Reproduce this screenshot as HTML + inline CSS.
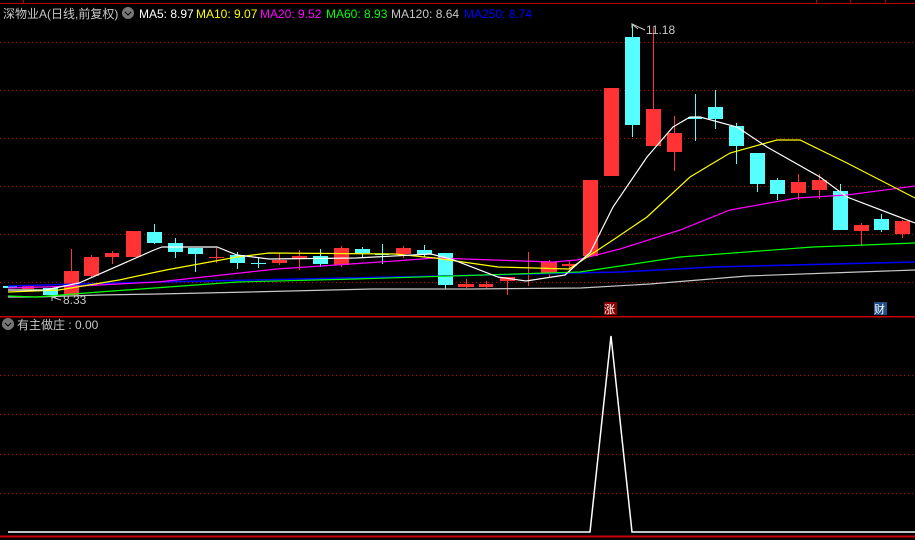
<!DOCTYPE html>
<html><head><meta charset="utf-8"><style>
html,body{margin:0;padding:0;background:#000;width:915px;height:540px;overflow:hidden}
svg{display:block}
text{font-family:"Liberation Sans","Noto Sans CJK SC",sans-serif;font-size:12px}
</style></head><body>
<svg width="915" height="540" viewBox="0 0 915 540" xmlns="http://www.w3.org/2000/svg" shape-rendering="crispEdges">
<rect width="915" height="540" fill="#000"/>
<line x1="0" y1="3.5" x2="915" y2="3.5" stroke="#b00" />
<line x1="23.5" y1="0" x2="23.5" y2="3" stroke="#b00"/>
<line x1="816.5" y1="0" x2="816.5" y2="3" stroke="#b00"/>
<line x1="850.5" y1="0" x2="850.5" y2="3" stroke="#b00"/>
<line x1="885.5" y1="0" x2="885.5" y2="3" stroke="#b00"/>
<g stroke="#c00" stroke-dasharray="1,3">
<line x1="0" y1="42.5" x2="915" y2="42.5"/><line x1="0" y1="90.5" x2="915" y2="90.5"/>
<line x1="0" y1="138.5" x2="915" y2="138.5"/><line x1="0" y1="186.5" x2="915" y2="186.5"/>
<line x1="0" y1="234.5" x2="915" y2="234.5"/><line x1="0" y1="282.5" x2="915" y2="282.5"/>
<line x1="0" y1="375.5" x2="915" y2="375.5"/><line x1="0" y1="414.5" x2="915" y2="414.5"/>
<line x1="0" y1="454.5" x2="915" y2="454.5"/><line x1="0" y1="493.5" x2="915" y2="493.5"/>
</g>
<line x1="0" y1="316.5" x2="915" y2="316.5" stroke="#c00" stroke-width="1.5"/>
<line x1="0" y1="536.5" x2="915" y2="536.5" stroke="#c00" stroke-width="2"/>

<!-- candles: wicks -->
<g stroke-width="1" shape-rendering="crispEdges">
<g stroke="#ff3333">
<line x1="71.5" y1="249" x2="71.5" y2="295"/><line x1="91.5" y1="255" x2="91.5" y2="277"/>
<line x1="112.5" y1="251" x2="112.5" y2="264"/><line x1="216.5" y1="248" x2="216.5" y2="263"/>
<line x1="279.5" y1="253" x2="279.5" y2="265"/><line x1="299.5" y1="250" x2="299.5" y2="270"/>
<line x1="341.5" y1="246" x2="341.5" y2="267"/><line x1="403.5" y1="246" x2="403.5" y2="258"/>
<line x1="466.5" y1="279" x2="466.5" y2="288"/><line x1="486.5" y1="281" x2="486.5" y2="288"/>
<line x1="507.5" y1="279" x2="507.5" y2="295"/><line x1="528.5" y1="252" x2="528.5" y2="286"/>
<line x1="549.5" y1="260" x2="549.5" y2="277"/><line x1="569.5" y1="260" x2="569.5" y2="272"/>
<line x1="653.5" y1="28" x2="653.5" y2="146"/><line x1="674.5" y1="116" x2="674.5" y2="171"/>
<line x1="798.5" y1="174" x2="798.5" y2="200"/><line x1="819.5" y1="174" x2="819.5" y2="199"/>
<line x1="861.5" y1="223" x2="861.5" y2="246"/><line x1="902.5" y1="220" x2="902.5" y2="238"/>
</g>
<g stroke="#55ffff">
<line x1="154.5" y1="224" x2="154.5" y2="244"/><line x1="175.5" y1="238" x2="175.5" y2="258"/>
<line x1="195.5" y1="248" x2="195.5" y2="272"/><line x1="237.5" y1="252" x2="237.5" y2="269"/>
<line x1="258.5" y1="258" x2="258.5" y2="268"/><line x1="320.5" y1="249" x2="320.5" y2="267"/>
<line x1="362.5" y1="247" x2="362.5" y2="257"/><line x1="382.5" y1="244" x2="382.5" y2="264"/>
<line x1="424.5" y1="245" x2="424.5" y2="257"/><line x1="445.5" y1="253" x2="445.5" y2="289"/>
<line x1="632.5" y1="25" x2="632.5" y2="137"/><line x1="695.5" y1="94" x2="695.5" y2="141"/>
<line x1="715.5" y1="90" x2="715.5" y2="129"/><line x1="736.5" y1="123" x2="736.5" y2="164"/>
<line x1="757.5" y1="153" x2="757.5" y2="192"/><line x1="777.5" y1="178" x2="777.5" y2="200"/>
<line x1="840.5" y1="184" x2="840.5" y2="230"/><line x1="881.5" y1="214" x2="881.5" y2="232"/>
</g>
</g>
<g fill="#ff3333">
<rect x="22" y="286" width="12" height="3"/>
<rect x="64" y="271" width="15" height="24"/><rect x="84" y="257" width="15" height="19"/>
<rect x="105" y="253" width="14" height="4"/><rect x="126" y="231" width="15" height="26"/>
<rect x="209" y="257" width="15" height="1"/><rect x="272" y="260" width="15" height="3"/>
<rect x="292" y="256" width="15" height="3"/><rect x="334" y="248" width="15" height="17"/>
<rect x="396" y="248" width="15" height="6"/><rect x="458" y="284" width="16" height="3"/>
<rect x="479" y="284" width="14" height="3"/><rect x="500" y="277" width="15" height="4"/>
<rect x="521" y="273" width="15" height="1"/><rect x="541" y="262" width="16" height="11"/>
<rect x="562" y="264" width="15" height="2"/>
<rect x="583" y="180" width="15" height="76"/><rect x="604" y="88" width="15" height="88"/>
<rect x="646" y="109" width="15" height="37"/><rect x="667" y="133" width="15" height="19"/>
<rect x="791" y="182" width="15" height="11"/><rect x="812" y="180" width="15" height="10"/>
<rect x="854" y="225" width="15" height="6"/><rect x="895" y="221" width="15" height="13"/>
</g>
<g fill="#55ffff">
<rect x="3" y="286" width="14" height="2"/>
<rect x="43" y="288" width="15" height="7"/><rect x="147" y="232" width="15" height="11"/>
<rect x="168" y="243" width="15" height="9"/><rect x="188" y="248" width="15" height="6"/>
<rect x="230" y="255" width="15" height="8"/><rect x="251" y="263" width="15" height="1"/>
<rect x="313" y="256" width="15" height="8"/><rect x="355" y="249" width="15" height="4"/>
<rect x="375" y="254" width="14" height="1"/><rect x="417" y="250" width="15" height="4"/>
<rect x="438" y="253" width="15" height="32"/>
<rect x="625" y="37" width="15" height="88"/><rect x="688" y="117" width="14" height="2"/>
<rect x="708" y="107" width="15" height="12"/><rect x="729" y="126" width="15" height="20"/>
<rect x="750" y="153" width="15" height="31"/><rect x="770" y="180" width="15" height="14"/>
<rect x="833" y="191" width="15" height="39"/><rect x="874" y="219" width="15" height="11"/>
</g>

<!-- MA lines -->
<g fill="none" stroke-width="1.2" shape-rendering="auto">
<polyline stroke="#c8c8c8" points="8,297 36,297 100,295 158,294 250,292 372,289 470,289 581,288 650,284 747,276 830,273 915,270"/>
<polyline stroke="#0000ff" stroke-width="1.5" points="8,286 158,282 395,277 620,272 713,267 915,262"/>
<polyline stroke="#00ff00" points="8,296 36,297 99,292 237,282 356,279 451,276 580,272 680,257 813,247 915,243"/>
<polyline stroke="#ff00ff" points="8,288 79,286 158,282 277,269 395,261 435,258 553,262 577,260 620,249 680,230 730,210 797,198 847,195 915,186"/>
<polyline stroke="#ffff00" points="8,292 59,290 119,280 166,270 237,257 269,253 395,254 435,258 498,267 569,269 613,240 647,217 690,177 730,153 777,140 800,140 847,163 915,198"/>
<polyline stroke="#ffffff" points="8,290 45,290 79,283 154,250 162,247 217,247 237,255 269,259 356,258 431,254 451,259 498,277 526,281 565,275 585,257 590,253 613,207 647,157 673,127 690,117 700,117 737,127 767,147 820,177 847,197 915,223"/>
</g>

<!-- labels -->
<text x="646" y="34" fill="#c8c8c8">11.18</text>
<polyline points="638,29 632,24 632,28" fill="none" stroke="#c8c8c8" shape-rendering="auto"/>
<line x1="632" y1="24" x2="645" y2="30" stroke="#c8c8c8" shape-rendering="auto"/>
<text x="63" y="304" fill="#c8c8c8">8.33</text>
<line x1="52" y1="297" x2="61" y2="300" stroke="#c8c8c8" shape-rendering="auto"/>
<polyline points="52,301 52,297 56,297" fill="none" stroke="#c8c8c8"/>
<rect x="604" y="302" width="13" height="13" fill="#8b0000"/>
<text x="604" y="313" fill="#fff" style="font-size:11px">涨</text>
<rect x="874" y="302" width="13" height="13" fill="#1f4f86"/>
<text x="874" y="313" fill="#fff" style="font-size:11px">财</text>

<!-- title -->
<text x="3" y="18" fill="#c8c8c8">深物业A(日线,前复权)</text>
<circle cx="128" cy="13" r="6" fill="#777"/>
<polyline points="125,12 128,15 131,12" fill="none" stroke="#000" stroke-width="1.3"/>
<text x="139" y="18" fill="#fff">MA5: 8.97</text>
<text x="196" y="18" fill="#ffff00">MA10: 9.07</text>
<text x="260" y="18" fill="#ff00ff">MA20: 9.52</text>
<text x="326" y="18" fill="#00ff00">MA60: 8.93</text>
<text x="391" y="18" fill="#c8c8c8">MA120: 8.64</text>
<text x="464" y="18" fill="#0000ff">MA250: 8.74</text>

<!-- lower pane -->
<circle cx="8" cy="324" r="6" fill="#777"/>
<polyline points="5,323 8,326 11,323" fill="none" stroke="#000" stroke-width="1.3"/>
<text x="17" y="329" fill="#c8c8c8">有主做庄 : 0.00</text>
<polyline points="8,532 590,532 611,336 632,532 915,532" fill="none" stroke="#fff" stroke-width="1.5" shape-rendering="auto"/>
</svg>
</body></html>
